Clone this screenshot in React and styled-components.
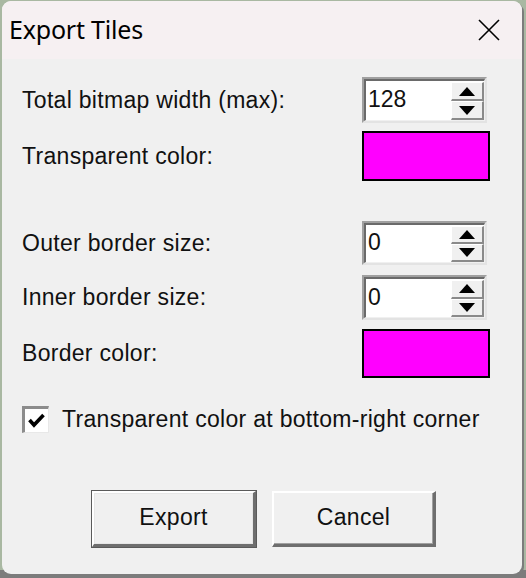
import styled, { createGlobalStyle } from "styled-components";

const GlobalStyle = createGlobalStyle`
  html, body {
    margin: 0;
    padding: 0;
    width: 526px;
    height: 578px;
    overflow: hidden;
    background: linear-gradient(to bottom, #a9b8a2 0, #a9b8a2 570px, #7c7c7c 570px);
  }
`;

const Frame = styled.div`
  box-sizing: border-box;
  margin: 1px 0 0 2px;
  width: 520px;
  height: 573px;
  border-radius: 9px;
  overflow: hidden;
  background: #f0f0f0;
  display: flex;
  flex-direction: column;
  box-shadow: 2px 2px 0 #7c7c7c;
`;

const TitleBar = styled.div`
  height: 58px;
  flex: none;
  background: #f6f0f2;
  display: flex;
  align-items: center;
  justify-content: space-between;
  padding: 0 22px 0 7px;
  font-family: "Noto Sans", "Open Sans", sans-serif;
  font-size: 25px;
  color: #000;
`;

const Title = styled.span`
  margin-top: -2px;
  letter-spacing: -0.2px;
`;

const Body = styled.div`
  flex: 1;
  padding: 18px 0 0 20px;
  font-family: "Liberation Sans", Arial, sans-serif;
  font-size: 23px;
  letter-spacing: 0.3px;
  color: #111;
`;

const Row = styled.div`
  display: flex;
  align-items: center;
  height: ${(p) => p.$h}px;
  margin-top: ${(p) => p.$mt || 0}px;
`;

const Label = styled.div`
  width: 340px;
`;

const SpinBox = styled.div`
  box-sizing: border-box;
  width: 125px;
  height: 100%;
  display: flex;
  align-items: stretch;
  border-top: 2px solid #a0a0a0;
  border-left: 2px solid #a0a0a0;
  border-right: 2px solid #e3e3e3;
  border-bottom: 2px solid #e3e3e3;
`;

const SpinInner = styled.div`
  flex: 1;
  display: flex;
  align-items: stretch;
  background: #fff;
  border-top: 2px solid #6a6a6a;
  border-left: 2px solid #6a6a6a;
  border-right: 1px solid #f0f0f0;
  border-bottom: 1px solid #f0f0f0;
`;

const SpinValue = styled.div`
  flex: 1;
  padding-left: 2px;
  display: flex;
  align-items: center;
  margin-top: -2px;
  letter-spacing: 0;
`;

const SpinButtons = styled.div`
  width: 33px;
  display: flex;
  flex-direction: column;
  padding: 1px 0 0;
`;

const SpinBtn = styled.div`
  flex: 1;
  box-sizing: border-box;
  background: #f0f0f0;
  display: flex;
  align-items: center;
  justify-content: center;
  border-top: 1px solid #fff;
  border-left: 1px solid #fff;
  border-right: 2px solid #8a8a8a;
  border-bottom: 2px solid #8a8a8a;
`;

const ColorBox = styled.div`
  box-sizing: border-box;
  width: 128px;
  height: 100%;
  background: ${(p) => p.$color};
  border: 2px solid #000;
`;

const CheckRow = styled.label`
  display: flex;
  align-items: center;
  gap: 13px;
  margin-top: 27px;
  height: 28px;
`;

const CheckBox = styled.div`
  box-sizing: border-box;
  width: 27px;
  height: 27px;
  background: #fff;
  border-top: 3px solid #8c8c8c;
  border-left: 3px solid #8c8c8c;
  border-right: 1px solid #e8e8e8;
  border-bottom: 1px solid #e8e8e8;
  display: flex;
  align-items: center;
  justify-content: center;
`;

const Buttons = styled.div`
  display: flex;
  gap: 16px;
  margin: 58px 0 0 70px;
`;

const Button = styled.button`
  box-sizing: border-box;
  width: 164px;
  height: 56px;
  font-family: "Liberation Sans", Arial, sans-serif;
  font-size: 23px;
  letter-spacing: 0.3px;
  color: #111;
  background: #f0f0f0;
  padding: 0 0 3px;
  border-top: 2px solid #fff;
  border-left: 2px solid #fff;
  border-right: 3px solid #6e6e6e;
  border-bottom: 3px solid #6e6e6e;
  outline: ${(p) => (p.$default ? "1px solid #5a5a5a" : "none")};
  outline-offset: 0;
  box-shadow: ${(p) => (p.$default ? "inset 0 0 0 1px #e6e6e6" : "inset -1px -1px 0 #a0a0a0")};
`;

function Arrow({ up }) {
  return (
    <svg width="16" height="9" viewBox="0 0 16 9">
      {up ? <path d="M8 0 L16 9 L0 9 Z" fill="#000" /> : <path d="M0 0 L16 0 L8 9 Z" fill="#000" />}
    </svg>
  );
}

function Spin({ value }) {
  return (
    <SpinBox>
      <SpinInner>
        <SpinValue>{value}</SpinValue>
        <SpinButtons>
          <SpinBtn><Arrow up /></SpinBtn>
          <SpinBtn><Arrow /></SpinBtn>
        </SpinButtons>
      </SpinInner>
    </SpinBox>
  );
}

export default function App() {
  return (
    <>
      <GlobalStyle />
      <Frame>
        <TitleBar>
          <Title>Export Tiles</Title>
          <svg width="22" height="22" viewBox="0 0 22 22">
            <path d="M1 1 L21 21 M21 1 L1 21" stroke="#000" strokeWidth="1.6" />
          </svg>
        </TitleBar>
        <Body>
          <Row $h={46}>
            <Label>Total bitmap width (max):</Label>
            <Spin value="128" />
          </Row>
          <Row $h={50} $mt={8}>
            <Label>Transparent color:</Label>
            <ColorBox $color="#ff00ff" />
          </Row>
          <Row $h={44} $mt={40}>
            <Label>Outer border size:</Label>
            <Spin value="0" />
          </Row>
          <Row $h={45} $mt={10}>
            <Label>Inner border size:</Label>
            <Spin value="0" />
          </Row>
          <Row $h={49} $mt={9}>
            <Label>Border color:</Label>
            <ColorBox $color="#ff00ff" />
          </Row>
          <CheckRow>
            <CheckBox>
              <svg width="17" height="15" viewBox="0 0 17 15">
                <path d="M1.5 7 L6 12 L15.5 2" stroke="#000" strokeWidth="3.6" fill="none" />
              </svg>
            </CheckBox>
            <span>Transparent color at bottom-right corner</span>
          </CheckRow>
          <Buttons>
            <Button $default>Export</Button>
            <Button>Cancel</Button>
          </Buttons>
        </Body>
      </Frame>
    </>
  );
}
